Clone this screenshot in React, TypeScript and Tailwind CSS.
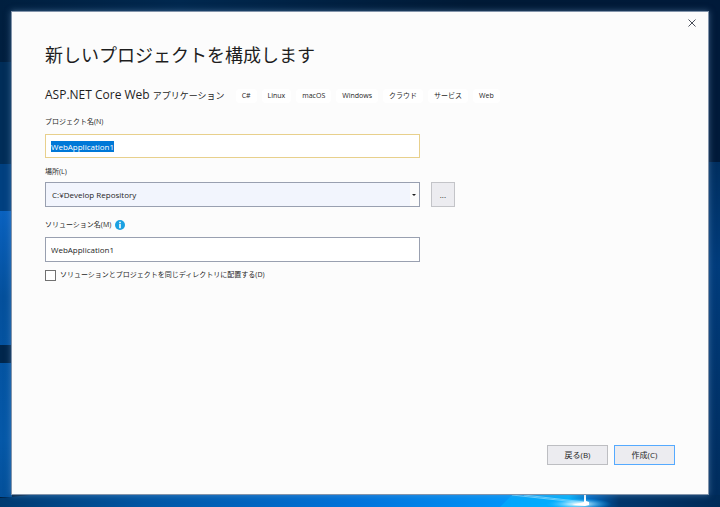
import { useEffect, useRef, useState } from "react";

const tags = ["C#", "Linux", "macOS", "Windows", "クラウド", "サービス", "Web"];

const Wallpaper = () => (
  <svg
    className="absolute inset-0 -z-10 h-full w-full"
    viewBox="0 0 720 507"
    preserveAspectRatio="none"
    aria-hidden="true"
  >
    <defs>
      <linearGradient id="sky" x1="0" x2="1" y1="0" y2="0">
        <stop offset="0" stopColor="#001f3f" />
        <stop offset="0.25" stopColor="#00284f" />
        <stop offset="0.65" stopColor="#001a36" />
        <stop offset="1" stopColor="#001a3a" />
      </linearGradient>
      <linearGradient id="left" x1="0" x2="0" y1="0" y2="1">
        <stop offset="0" stopColor="#0a62c0" />
        <stop offset="0.3" stopColor="#04509c" />
        <stop offset="0.8" stopColor="#0558a8" />
        <stop offset="1" stopColor="#04509a" />
      </linearGradient>
      <linearGradient id="right" x1="0" x2="0" y1="0" y2="1">
        <stop offset="0" stopColor="#002f60" />
        <stop offset="0.3" stopColor="#003c7c" />
        <stop offset="1" stopColor="#002c5c" />
      </linearGradient>
      <linearGradient id="floor" x1="0" x2="1" y1="0" y2="0">
        <stop offset="0" stopColor="#003a70" />
        <stop offset="0.2" stopColor="#0056a4" />
        <stop offset="0.5" stopColor="#0074dc" />
        <stop offset="0.7" stopColor="#0094f8" />
        <stop offset="0.79" stopColor="#00b4ff" />
        <stop offset="0.82" stopColor="#0068c0" />
        <stop offset="0.86" stopColor="#00366c" />
        <stop offset="1" stopColor="#002b58" />
      </linearGradient>
      <radialGradient id="glow">
        <stop offset="0" stopColor="#ffffff" />
        <stop offset="0.3" stopColor="#b8ecff" stopOpacity="0.8" />
        <stop offset="1" stopColor="#00a8ff" stopOpacity="0" />
      </radialGradient>
    </defs>
    <rect width="720" height="507" fill="url(#sky)" />
    <rect y="62" width="12" height="102" fill="#002d58" />
    <rect y="164" width="12" height="47" fill="#004080" />
    <rect y="211" width="12" height="286" fill="url(#left)" />
    <rect y="345" width="12" height="18" fill="#00264c" />
    <rect x="708" y="162" width="12" height="345" fill="url(#right)" />
    <path d="M0 498L30 495H720V507H0Z" fill="url(#floor)" />
    <path d="M512 495L585 503L545 507H500Z" fill="#00b0ff" opacity="0.6" />
    <path d="M512 495L585 503M524 495L585 502" stroke="#9be4ff" strokeOpacity="0.7" />
    <ellipse cx="578" cy="504" rx="34" ry="6" fill="url(#glow)" />
    <path d="M584 495H586V501L589 502V505L585 506L572 505L584 502Z" fill="#ffffff" />
  </svg>
);

const InfoIcon = () => (
  <svg className="h-[10px] w-[10px]" viewBox="0 0 10 10" role="img" aria-label="情報">
    <circle cx="5" cy="5" r="5" fill="#1ba1e2" />
    <path d="M4.2 1.8H5.8V3.2H4.2ZM4.2 4H5.8V8.2H4.2Z" fill="#ffffff" />
  </svg>
);

const App = () => {
  const nameRef = useRef<HTMLInputElement>(null);
  const [projectName, setProjectName] = useState("WebApplication1");
  const [solutionName, setSolutionName] = useState("WebApplication1");

  useEffect(() => {
    nameRef.current?.focus();
    nameRef.current?.select();
  }, []);

  return (
    <div className="relative isolate flex min-h-screen flex-col px-[11px] pt-[11px] pb-3 font-['Open_Sans','Noto_Sans_CJK_JP',sans-serif] text-[#1e1e1e]">
      <Wallpaper />
      <main className="flex flex-1 flex-col border border-[#8294ab] bg-[#fcfcfc] shadow-[0_0_6px_rgba(120,160,200,0.5)]">
        <header className="flex justify-end pt-[6px] pr-[11px]">
          <button type="button" aria-label="閉じる" className="p-px">
            <svg className="h-[8px] w-[8px]" viewBox="0 0 8 8">
              <path d="M0.5 0.5L7.5 7.5M7.5 0.5L0.5 7.5" stroke="#4a4f5a" />
            </svg>
          </button>
        </header>

        <form
          className="flex flex-1 flex-col px-[33px] pb-[29px]"
          onSubmit={(e) => e.preventDefault()}
        >
          <h1 className="mt-[13px] text-[18px] leading-7">
            新しいプロジェクトを構成します
          </h1>

          <div className="mt-4 flex items-center gap-[11px]">
            <h2 className="text-[12px] leading-5 whitespace-nowrap">
              ASP.NET Core Web <span className="text-[9px]">アプリケーション</span>
            </h2>
            <ul className="flex gap-[5px]">
              {tags.map((tag) => (
                <li
                  key={tag}
                  className="rounded-sm bg-white px-[6px] text-[7px] leading-[14px] whitespace-nowrap"
                >
                  {tag}
                </li>
              ))}
            </ul>
          </div>

          <label htmlFor="project" className="mt-[11px] text-[7px] leading-[10px]">
            プロジェクト名(N)
          </label>
          <input
            id="project"
            ref={nameRef}
            value={projectName}
            onChange={(e) => setProjectName(e.target.value)}
            className="mt-[7px] h-6 w-[59.5%] border border-[#e8d08c] bg-white px-[5px] text-[8px] outline-none selection:bg-[#0078d7] selection:text-white"
          />

          <label htmlFor="location" className="mt-[9px] text-[7px] leading-[10px]">
            場所(L)
          </label>
          <div className="mt-[5px] flex gap-[11px]">
            <div className="relative w-[59.5%]">
              <select
                id="location"
                className="block h-[25px] w-full appearance-none border border-[#99a0b0] bg-[#f2f5fd] px-[6px] text-[8px] outline-none"
              >
                <option>C:¥Develop Repository</option>
              </select>
              <span className="pointer-events-none absolute inset-y-px right-px flex w-[9px] items-center justify-center bg-[#fcfcfc]">
                <svg className="h-[2px] w-[4px]" viewBox="0 0 4 2">
                  <path d="M0 0H4L2 2Z" fill="#1e1e1e" />
                </svg>
              </span>
            </div>
            <button
              type="button"
              aria-label="参照"
              className="h-[25px] w-6 border border-[#c3c4c8] bg-[#ececf0] text-[8px]"
            >
              ...
            </button>
          </div>

          <div className="mt-[13px] flex items-center gap-1">
            <label htmlFor="solution" className="text-[7px] leading-[10px]">
              ソリューション名(M)
            </label>
            <InfoIcon />
          </div>
          <input
            id="solution"
            value={solutionName}
            onChange={(e) => setSolutionName(e.target.value)}
            className="mt-[7px] h-[25px] w-[59.5%] border border-[#99a0b0] bg-white px-[5px] text-[8px] outline-none"
          />

          <div className="mt-[6px] flex items-center gap-1">
            <input
              id="same-dir"
              type="checkbox"
              className="h-[11px] w-[11px] appearance-none border border-[#717171] bg-white checked:bg-[#0078d7]"
            />
            <label htmlFor="same-dir" className="text-[7px] leading-[14px]">
              ソリューションとプロジェクトを同じディレクトリに配置する(D)
            </label>
          </div>

          <footer className="mt-auto flex justify-end gap-[6px] text-[8px]">
            <button
              type="button"
              className="h-5 w-[61px] border border-[#bdbec2] bg-[#ececf0]"
            >
              戻る(B)
            </button>
            <button
              type="submit"
              className="h-5 w-[61px] border border-[#55aaff] bg-[#ececf0]"
            >
              作成(C)
            </button>
          </footer>
        </form>
      </main>
    </div>
  );
};

export default App;
